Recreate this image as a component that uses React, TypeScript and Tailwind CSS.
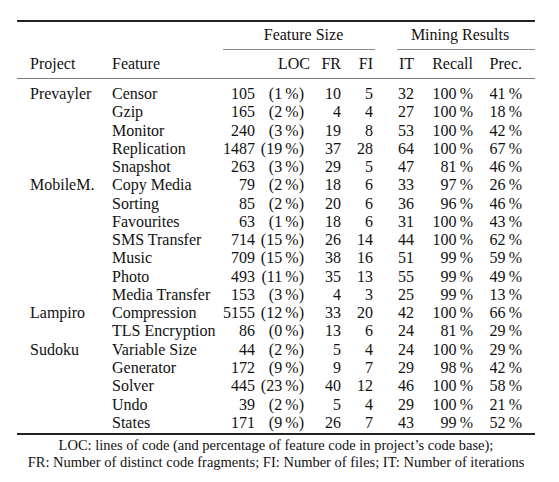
import React from "react";

const rows: string[][] = [
  ["Prevayler", "Censor", "105", "1", "10", "5", "32", "100", "41"],
  ["", "Gzip", "165", "2", "4", "4", "27", "100", "18"],
  ["", "Monitor", "240", "3", "19", "8", "53", "100", "42"],
  ["", "Replication", "1487", "19", "37", "28", "64", "100", "67"],
  ["", "Snapshot", "263", "3", "29", "5", "47", "81", "46"],
  ["MobileM.", "Copy Media", "79", "2", "18", "6", "33", "97", "26"],
  ["", "Sorting", "85", "2", "20", "6", "36", "96", "46"],
  ["", "Favourites", "63", "1", "18", "6", "31", "100", "43"],
  ["", "SMS Transfer", "714", "15", "26", "14", "44", "100", "62"],
  ["", "Music", "709", "15", "38", "16", "51", "99", "59"],
  ["", "Photo", "493", "11", "35", "13", "55", "99", "49"],
  ["", "Media Transfer", "153", "3", "4", "3", "25", "99", "13"],
  ["Lampiro", "Compression", "5155", "12", "33", "20", "42", "100", "66"],
  ["", "TLS Encryption", "86", "0", "13", "6", "24", "81", "29"],
  ["Sudoku", "Variable Size", "44", "2", "5", "4", "24", "100", "29"],
  ["", "Generator", "172", "9", "9", "7", "29", "98", "42"],
  ["", "Solver", "445", "23", "40", "12", "46", "100", "58"],
  ["", "Undo", "39", "2", "5", "4", "29", "100", "21"],
  ["", "States", "171", "9", "26", "7", "43", "99", "52"],
];

const grid =
  "grid grid-cols-[95px_110px_33px_49px_37px_32px_41px_59px_49px_13px]";

export default function App() {
  return (
    <div className="w-[559px] h-[482px] bg-white text-[#111] font-['Liberation_Serif',serif] overflow-hidden">
      <div className="ml-[17px] w-[518px] pt-[20px]">
        <div className="h-[2px] bg-[#222]" />
        {/* header row 1 */}
        <div className={`${grid} mt-[4px] text-[16px] leading-[18px] h-[18px]`}>
          <div className="col-start-3 col-span-4 text-center pl-[12px] whitespace-nowrap">
            Feature Size
          </div>
          <div className="col-start-7 col-span-4 text-center pl-[12px] whitespace-nowrap">
            Mining Results
          </div>
        </div>
        {/* cmidrules */}
        <div className={`${grid} mt-[5px] h-[1px]`}>
          <div className="col-start-3 col-span-4 ml-[1px] mr-[-2px] h-[1px] bg-[#8a8a8a]" />
          <div className="col-start-7 col-span-4 ml-[24px] h-[1px] bg-[#8a8a8a]" />
        </div>
        {/* header row 2 */}
        <div className={`${grid} mt-[5px] text-[16px] leading-[18px] h-[18px] whitespace-nowrap`}>
          <div className="pl-[13px]">Project</div>
          <div>Feature</div>
          <div className="col-span-2 text-right mr-[-6px]">LOC</div>
          <div className="text-right">FR</div>
          <div className="text-right">FI</div>
          <div className="text-right">IT</div>
          <div className="text-right">Recall</div>
          <div className="text-right">Prec.</div>
        </div>
        <div className="mt-[5px] h-[1px] bg-[#7a7a7a]" />
        {/* body */}
        <div className="pt-[6px] pb-[1px]">
          {rows.map((r, i) => (
            <div
              key={i}
              className={`${grid} text-[16px] leading-[18.28px] h-[18.28px] whitespace-nowrap`}
            >
              <div className="pl-[13px]">{r[0]}</div>
              <div>{r[1]}</div>
              <div className="text-right">{r[2]}</div>
              <div className="text-right">({r[3]}{"\u2009"}%)</div>
              <div className="text-right">{r[4]}</div>
              <div className="text-right">{r[5]}</div>
              <div className="text-right">{r[6]}</div>
              <div className="text-right">{r[7]}{"\u2009"}%</div>
              <div className="text-right">{r[8]}{"\u2009"}%</div>
            </div>
          ))}
        </div>
        <div className="h-[2px] bg-[#222]" />
        <div className="mt-[2px] text-[14.5px] leading-[16.5px] text-center whitespace-nowrap">
          <div>LOC: lines of code (and percentage of feature code in project’s code base);</div>
          <div>FR: Number of distinct code fragments; FI: Number of files; IT: Number of iterations</div>
        </div>
      </div>
    </div>
  );
}
